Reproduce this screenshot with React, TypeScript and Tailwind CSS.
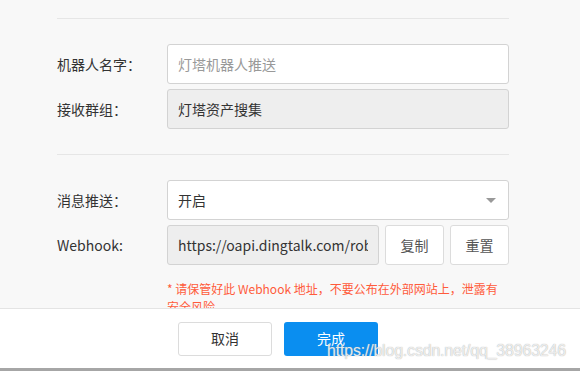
const font = "font-['Microsoft_YaHei','Noto_Sans_CJK_SC',sans-serif]";

function Row({ label, children }: { label: string; children: React.ReactNode }) {
  return (
    <div className="flex items-center h-[40px]">
      <div className="w-[110px] shrink-0 text-[14px] text-[#333]">{label}</div>
      <div className="flex-1 flex gap-[6px] h-full">{children}</div>
    </div>
  );
}

export default function App() {
  return (
    <div className={`w-[580px] h-[371px] bg-[#f8f8f8] flex flex-col overflow-hidden ${font}`}>
      <div className="h-[308px] shrink-0 overflow-hidden pl-[57px] pr-[71px] pt-[18px]">
        <div className="border-t border-[#e6e6e6]" />

        <div className="mt-[25px] flex flex-col gap-[5px]">
          <Row label="机器人名字：">
            <input
              placeholder="灯塔机器人推送"
              className="w-full h-full bg-white border border-[#d3d3d3] rounded-[3px] px-[10px] text-[14px] text-[#333] placeholder:text-[#999] outline-none"
            />
          </Row>
          <Row label="接收群组：">
            <div className="w-full h-full bg-[#eeeeee] border border-[#d3d3d3] rounded-[3px] px-[10px] flex items-center text-[14px] text-[#333]">
              灯塔资产搜集
            </div>
          </Row>
        </div>

        <div className="mt-[25px] border-t border-[#e6e6e6]" />

        <div className="mt-[25px] flex flex-col gap-[5px]">
          <Row label="消息推送：">
            <div className="relative w-full h-full bg-white border border-[#d3d3d3] rounded-[3px] px-[10px] flex items-center text-[14px] text-[#333]">
              开启
              <span className="absolute right-[12px] top-[17px] w-0 h-0 border-l-[5px] border-r-[5px] border-t-[5px] border-l-transparent border-r-transparent border-t-[#999]" />
            </div>
          </Row>
          <Row label="Webhook:">
            <div className="w-[212px] shrink-0 h-full bg-[#eeeeee] border border-[#d3d3d3] rounded-[3px] px-[10px] flex items-center text-[14px] text-[#333] overflow-hidden">
              <span className="block w-full overflow-hidden whitespace-nowrap">
                https://oapi.dingtalk.com/robot/send?access_token=
              </span>
            </div>
            <button className="w-[59px] h-full bg-white border border-[#dcdcdc] rounded-[3px] text-[14px] text-[#555]">
              复制
            </button>
            <button className="w-[59px] h-full bg-white border border-[#dcdcdc] rounded-[3px] text-[14px] text-[#555]">
              重置
            </button>
          </Row>
        </div>

        <div className="mt-[15px] ml-[110px] text-[12px] leading-[18px] text-[#ff5b3b] whitespace-nowrap">
          <div>* 请保管好此 Webhook 地址，不要公布在外部网站上，泄露有</div>
          <div>安全风险。</div>
        </div>
      </div>

      <div className="relative flex-1 bg-white border-t border-[#e4e4e4] flex items-center justify-center gap-[12px] pr-[24px]">
        <button className="w-[94px] h-[34px] bg-white border border-[#dcdcdc] rounded-[3px] text-[14px] text-[#333]">
          取消
        </button>
        <button className="w-[94px] h-[34px] bg-[#0a8ef0] rounded-[3px] text-[14px] text-white">
          完成
        </button>
        <span className="absolute left-[327px] top-[31px] font-['Liberation_Sans',Arial,sans-serif] text-[16px] leading-[22px] tracking-[-0.2px] text-[#ffffffcc] [text-shadow:0_0_1px_#9a9a9a] pointer-events-none">
          https://blog.csdn.net/qq_38963246
        </span>
      </div>
      <div className="h-[3px] shrink-0 bg-[#a6a6a6]" />
    </div>
  );
}
